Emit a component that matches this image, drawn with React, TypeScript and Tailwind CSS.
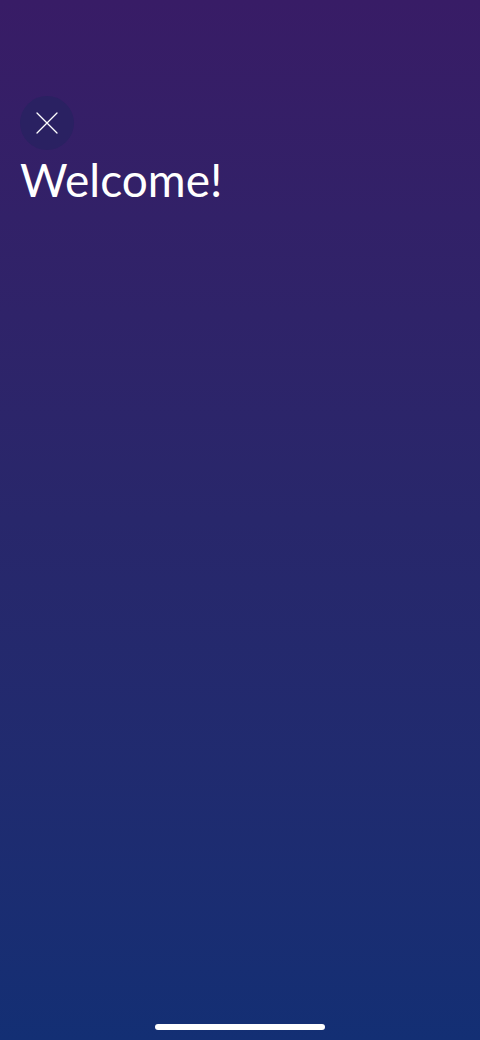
export default function App() {
  return (
    <div className="flex h-[1040px] w-full flex-col bg-gradient-to-b from-[#381c66] via-[#28276b] to-[#132f74] font-['Lato',sans-serif] text-white">
      <div className="flex flex-col px-5 pt-24">
        <button
          type="button"
          aria-label="Close"
          className="flex h-[54px] w-[54px] items-center justify-center rounded-full bg-[#2a2162]"
        >
          <svg width="22" height="22" viewBox="0 0 22 22" fill="none" stroke="white" strokeWidth="1.3" strokeLinecap="round">
            <path d="M1 1L21 21M21 1L1 21" />
          </svg>
        </button>
        <h1 className="mt-0.5 text-[46px] font-normal leading-[56px]">Welcome!</h1>
      </div>
      <div className="mt-auto flex justify-center pb-[10px]">
        <div className="h-[6px] w-[170px] rounded-full bg-white" />
      </div>
    </div>
  );
}
